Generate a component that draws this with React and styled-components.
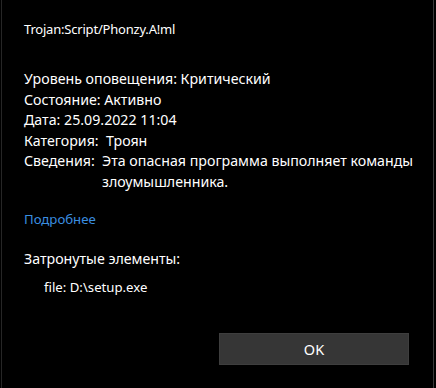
import React from 'react'
import styled, { createGlobalStyle } from 'styled-components'

const GlobalStyle = createGlobalStyle`
    html, body {
        margin: 0;
        padding: 0;
        background: #000;
    }
    body {
        font-family: "Noto Sans", "Open Sans", sans-serif;
        color: #fff;
    }
`

const Frame = styled.div`
    box-sizing: border-box;
    width: 436px;
    height: 388px;
    padding: 0 2px 0 1px;
    background: #000;
`

const Dialog = styled.div`
    box-sizing: border-box;
    height: 100%;
    border-left: 1px solid #262626;
    border-right: 1px solid #3a3a3a;
    padding: 19px 0 0 22px;
    display: flex;
    flex-direction: column;
`

const Title = styled.div`
    font-size: 13px;
    line-height: 20px;
    letter-spacing: -0.2px;
`

const Details = styled.div`
    margin-top: 30px;
    display: flex;
    flex-direction: column;
    font-size: 14.2px;
    line-height: 20.5px;
`

const Line = styled.div`
    white-space: nowrap;
`

const Pair = styled.div`
    display: grid;
    grid-template-columns: ${p => p.labelWidth}px 1fr;
`

const Link = styled.a`
    margin-top: 17px;
    font-size: 13.2px;
    line-height: 20px;
    color: #3b8fe0;
    text-decoration: none;
    align-self: flex-start;
`

const Section = styled.div`
    margin-top: 20px;
    font-size: 14.2px;
    line-height: 20px;
`

const FileItem = styled.div`
    margin: 8px 0 0 20px;
    font-size: 13.2px;
    line-height: 20px;
`

const Footer = styled.div`
    margin-top: auto;
    padding: 0 24px 23px 0;
    display: flex;
    justify-content: flex-end;
`

const Button = styled.button`
    width: 190px;
    height: 32px;
    background: #363636;
    border: 1px solid #3e3e3e;
    color: #fff;
    font-family: "Noto Sans", "Open Sans", sans-serif;
    font-size: 14.5px;
`

const App = () => (
    <Frame>
        <GlobalStyle />
        <Dialog>
            <Title>Trojan:Script/Phonzy.A!ml</Title>
            <Details>
                <Line>Уровень оповещения: Критический</Line>
                <Line>Состояние: Активно</Line>
                <Line>Дата: 25.09.2022 11:04</Line>
                <Line>Категория:&nbsp; Троян</Line>
                <Pair labelWidth={78}>
                    <span>Сведения:</span>
                    <span>
                        Эта опасная программа выполняет команды
                        <br />
                        злоумышленника.
                    </span>
                </Pair>
            </Details>
            <Link href="#">Подробнее</Link>
            <Section>Затронутые элементы:</Section>
            <FileItem>file: D:\setup.exe</FileItem>
            <Footer>
                <Button>OK</Button>
            </Footer>
        </Dialog>
    </Frame>
)

export default App
